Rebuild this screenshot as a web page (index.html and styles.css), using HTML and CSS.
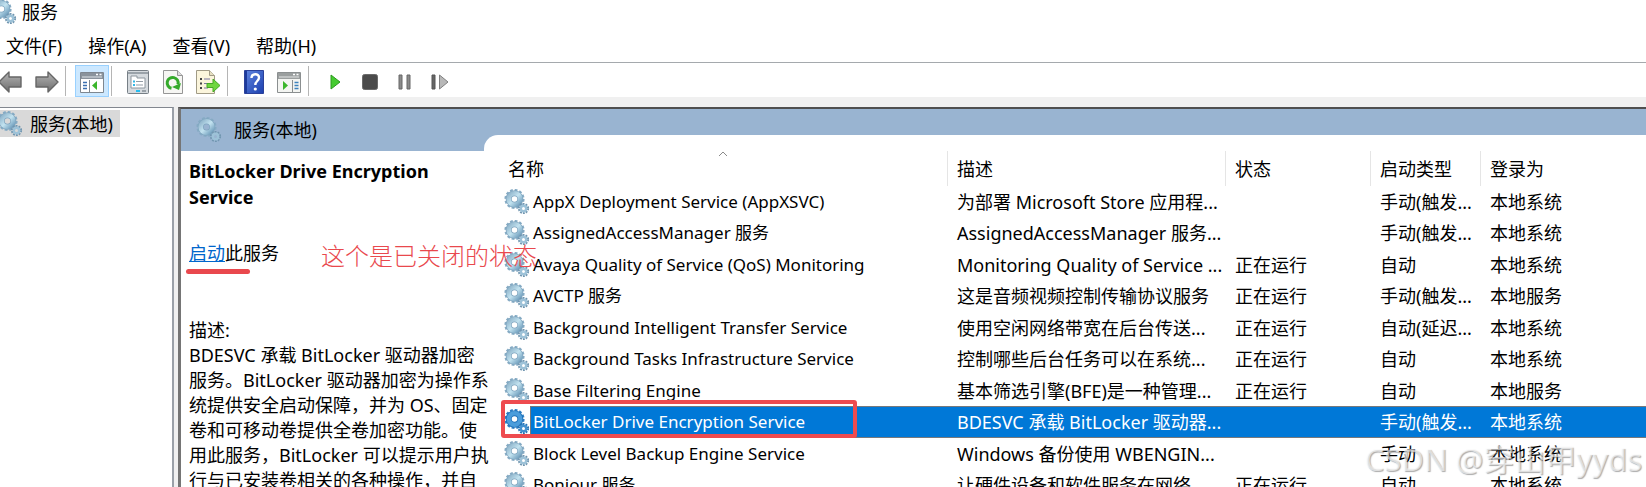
FILE: index.html
```html
<!DOCTYPE html>
<html lang="zh-CN">
<head>
    <meta charset="utf-8">
    <title>服务</title>
    <link rel="stylesheet" href="styles.css">
</head>
<body>
    <svg class="defs" aria-hidden="true">
        <defs>
            <linearGradient id="steel" x1="0" y1="0" x2="1" y2="1">
                <stop offset="0" stop-color="#8fb4cb"/>
                <stop offset=".5" stop-color="#c3e3f0"/>
                <stop offset="1" stop-color="#6f9dbc"/>
            </linearGradient>
            <linearGradient id="gray" x1="0" y1="0" x2="0" y2="1">
                <stop offset="0" stop-color="#b5b5b5"/>
                <stop offset="1" stop-color="#6c6c6c"/>
            </linearGradient>
            <linearGradient id="blue" x1="0" y1="0" x2="1" y2="1">
                <stop offset="0" stop-color="#6186e0"/>
                <stop offset="1" stop-color="#1b3fae"/>
            </linearGradient>
            <symbol id="gear" viewBox="0 0 26 26">
                <circle cx="10.500" cy="10" r="8.800" fill="none" stroke="#86abc4" stroke-width="2.600" stroke-dasharray="2.700 1.900"/>
                <circle cx="10.500" cy="10" r="5.800" fill="none" stroke="#7fa5bf" stroke-width="6"/>
                <circle cx="10.500" cy="10" r="5.800" fill="none" stroke="url(#steel)" stroke-width="4.600"/>
                <circle cx="19.500" cy="19.500" r="4.600" fill="none" stroke="#7196b0" stroke-width="2" stroke-dasharray="1.800 1.100"/>
                <circle cx="19.500" cy="19.500" r="2.700" fill="none" stroke="#9dc2d8" stroke-width="2.400"/>
            </symbol>
            <symbol id="gear-on" viewBox="0 0 26 26">
                <circle cx="10.500" cy="10" r="8.800" fill="none" stroke="#2f7fc4" stroke-width="2.600" stroke-dasharray="2.700 1.900"/>
                <circle cx="10.500" cy="10" r="5.800" fill="none" stroke="#2273ba" stroke-width="6"/>
                <circle cx="10.500" cy="10" r="5.800" fill="none" stroke="#4b9ddb" stroke-width="4.200"/>
                <circle cx="19.500" cy="19.500" r="4.600" fill="none" stroke="#2573b5" stroke-width="2" stroke-dasharray="1.800 1.100"/>
                <circle cx="19.500" cy="19.500" r="2.700" fill="none" stroke="#4391cf" stroke-width="2.400"/>
            </symbol>
            <symbol id="arrow" viewBox="0 0 26 22">
                <path d="M1 11 11 1v5h12v10H11v5z" fill="url(#gray)" stroke="#666" stroke-width="1.400" stroke-linejoin="round"/>
            </symbol>
        </defs>
    </svg>

    <header class="titlebar">
        <svg class="gear"><use href="#gear"/></svg>
        <span>服务</span>
    </header>

    <nav class="menu">
        <button>文件(F)</button>
        <button>操作(A)</button>
        <button>查看(V)</button>
        <button>帮助(H)</button>
    </nav>

    <div class="toolbar">
        <button aria-label="后退"><svg width="26" height="22"><use href="#arrow"/></svg></button>
        <button aria-label="前进"><svg class="flip" width="26" height="22"><use href="#arrow"/></svg></button>
        <span class="sep"></span>
        <button class="active" aria-label="显示/隐藏控制台树">
            <svg width="24" height="21" viewBox="0 0 24 21">
                <path d="M.5.500h23v20H.5z" fill="#fff" stroke="#7e8790"/>
                <path d="M1 1h22v6H1z" fill="#8a939c"/>
                <path d="M2 5h20" stroke="#dfe4e8"/>
                <path d="M16 2.500h2M19.500 2.500h2" stroke="#fff" stroke-width="1.500"/>
                <path d="M9.500 8v12" stroke="#7e8790"/>
                <path d="M3 10.500h4M3 13.500h4M3 16.500h4" stroke="#3b6fb0" stroke-width="1.500"/>
                <path d="m17 9-5 4.500 5 4.500z" fill="#3cb62c"/>
            </svg>
        </button>
        <span class="sep"></span>
        <button aria-label="属性">
            <svg width="22" height="24" viewBox="0 0 22 24">
                <rect x=".5" y=".5" width="21" height="23" rx="1" fill="#d5dade" stroke="#777f86"/>
                <path d="M1 3h20" stroke="#9aa2a9" stroke-width="2"/>
                <path d="M4 6h6v2h8v10H4z" fill="#fff" stroke="#8d969e"/>
                <path d="M6 11.500h2M6 15h2" stroke="#32b7e6" stroke-width="2"/>
                <path d="M9 11.500h7M9 15h7" stroke="#939ca5"/>
                <path d="M9 21h4" stroke="#27bdf0" stroke-width="2"/><path d="M15 21h4" stroke="#9aa2a9" stroke-width="2"/>
            </svg>
        </button>
        <button aria-label="刷新">
            <svg width="20" height="24" viewBox="0 0 20 24">
                <path d="M.5.500h14l5 5v18H.5z" fill="#f6f6f3" stroke="#969696"/>
                <path d="M14.500.500v5h5" fill="#ddd" stroke="#969696"/>
                <path d="M8.500 18.300a5.500 5.500 0 1 1 6.500-4" fill="none" stroke="#35aa2b" stroke-width="3"/>
                <path d="m18 13-2 7-7-3z" fill="#35aa2b"/>
            </svg>
        </button>
        <button aria-label="导出列表">
            <svg width="25" height="24" viewBox="0 0 25 24">
                <path d="M.5.500h13l5 5v18H.5z" fill="#fbf5dc" stroke="#a19b86"/>
                <path d="M13.500.500v5h5" fill="#e6dfc2" stroke="#a19b86"/>
                <path d="M4 9h2M4 13.500h2M4 18h2" stroke="#444" stroke-width="2"/>
                <path d="M8 9h6M8 13.500h4M8 18h4" stroke="#7b77a0"/>
                <path d="M11 13.500h6V9l7 6.500-7 6.500v-4.500h-6z" fill="#6fd63e" stroke="#45a926"/>
            </svg>
        </button>
        <span class="sep"></span>
        <button aria-label="帮助">
            <svg width="20" height="24" viewBox="0 0 20 24">
                <path d="M.5.500h19v23H.5z" fill="url(#blue)" stroke="#2b419a"/>
                <path d="M2 1v22" stroke="#1d3a9b" stroke-width="2"/>
                <path d="M7.500 8c0-5 7.500-5 7.500-.5 0 3.500-3.700 3.500-3.700 7.500" fill="none" stroke="#fff" stroke-width="2.400"/>
                <circle cx="11.300" cy="19" r="1.600" fill="#fff"/>
            </svg>
        </button>
        <button aria-label="显示/隐藏操作窗格">
            <svg width="24" height="21" viewBox="0 0 24 21">
                <path d="M.5.500h23v20H.5z" fill="#f4f5f2" stroke="#8b8f90"/>
                <path d="M1 1h22v6H1z" fill="#9b9f9f"/>
                <path d="M2 5h20" stroke="#e4e6e6"/>
                <path d="M16 2.500h2M19.500 2.500h2" stroke="#fff" stroke-width="1.500"/>
                <path d="M15.500 8v12" stroke="#8b8f90"/>
                <path d="M17.500 10.500h4M17.500 13.500h4M17.500 16.500h4" stroke="#3d82bd" stroke-width="1.500"/>
                <path d="m6 9 5 4.500L6 18z" fill="#3cb62c"/>
            </svg>
        </button>
        <span class="sep"></span>
        <button aria-label="启动服务">
            <svg width="11" height="16" viewBox="0 0 11 16"><path d="M1 1v14l9-7z" fill="#45cb30" stroke="#2c9a1f" stroke-linejoin="round"/></svg>
        </button>
        <button aria-label="停止服务">
            <svg width="16" height="16" viewBox="0 0 16 16"><rect x=".5" y=".5" width="15" height="15" rx="2" fill="#4b4b4b" stroke="#6b6b6b"/></svg>
        </button>
        <button aria-label="暂停服务">
            <svg width="14" height="16" viewBox="0 0 14 16"><path d="M1 1h3v14H1zM9 1h3v14H9z" fill="#8c8c8c" stroke="#666"/></svg>
        </button>
        <button aria-label="重新启动服务">
            <svg width="18" height="16" viewBox="0 0 18 16"><path d="M1 1h3v14H1z" fill="#666" stroke="#555"/><path d="M8.500 1v14l8.500-7z" fill="#b8b8b8" stroke="#808080" stroke-linejoin="round"/></svg>
        </button>
    </div>

    <main class="window">
        <aside class="tree">
            <a class="tree-item" href="#"><svg class="gear"><use href="#gear"/></svg>服务(本地)</a>
        </aside>

        <section class="panel">
            <div class="side">
                <div class="side-head"><svg class="gear"><use href="#gear"/></svg>服务(本地)</div>
                <div class="details">
                    <h2>BitLocker Drive Encryption Service</h2>
                    <p class="action"><a href="#">启动</a>此服务</p>
                    <p class="desc">描述:<br>
                        BDESVC 承载 BitLocker 驱动器加密<br>
                        服务。BitLocker 驱动器加密为操作系<br>
                        统提供安全启动保障，并为 OS、固定<br>
                        卷和可移动卷提供全卷加密功能。使<br>
                        用此服务，BitLocker 可以提示用户执<br>
                        行与已安装卷相关的各种操作，并自</p>
                    <span class="underline"></span>
                    <span class="note">这个是已关闭的状态</span>
                </div>
            </div>

            <div class="list">
                <table>
                    <colgroup>
                        <col class="col-name"><col class="col-desc"><col class="col-state"><col class="col-type"><col>
                    </colgroup>
                    <thead>
                        <tr>
                            <th>名称<svg class="sort" width="10" height="6" viewBox="0 0 10 6"><path d="m1 5 4-4 4 4" fill="none" stroke="#8a8a8a"/></svg></th>
                            <th>描述</th><th>状态</th><th>启动类型</th><th>登录为</th>
                        </tr>
                    </thead>
                    <tbody>
                        <tr>
                            <td><div class="name"><svg class="gear"><use href="#gear"/></svg><span>AppX Deployment Service (AppXSVC)</span></div></td>
                            <td>为部署 Microsoft Store 应用程...</td><td></td><td>手动(触发...</td><td>本地系统</td>
                        </tr>
                        <tr>
                            <td><div class="name"><svg class="gear"><use href="#gear"/></svg><span>AssignedAccessManager 服务</span></div></td>
                            <td>AssignedAccessManager 服务...</td><td></td><td>手动(触发...</td><td>本地系统</td>
                        </tr>
                        <tr>
                            <td><div class="name"><svg class="gear"><use href="#gear"/></svg><span>Avaya Quality of Service (QoS) Monitoring</span></div></td>
                            <td>Monitoring Quality of Service ...</td><td>正在运行</td><td>自动</td><td>本地系统</td>
                        </tr>
                        <tr>
                            <td><div class="name"><svg class="gear"><use href="#gear"/></svg><span>AVCTP 服务</span></div></td>
                            <td>这是音频视频控制传输协议服务</td><td>正在运行</td><td>手动(触发...</td><td>本地服务</td>
                        </tr>
                        <tr>
                            <td><div class="name"><svg class="gear"><use href="#gear"/></svg><span>Background Intelligent Transfer Service</span></div></td>
                            <td>使用空闲网络带宽在后台传送...</td><td>正在运行</td><td>自动(延迟...</td><td>本地系统</td>
                        </tr>
                        <tr>
                            <td><div class="name"><svg class="gear"><use href="#gear"/></svg><span>Background Tasks Infrastructure Service</span></div></td>
                            <td>控制哪些后台任务可以在系统...</td><td>正在运行</td><td>自动</td><td>本地系统</td>
                        </tr>
                        <tr>
                            <td><div class="name"><svg class="gear"><use href="#gear"/></svg><span>Base Filtering Engine</span></div></td>
                            <td>基本筛选引擎(BFE)是一种管理...</td><td>正在运行</td><td>自动</td><td>本地服务</td>
                        </tr>
                        <tr class="selected">
                            <td><div class="name"><svg class="gear"><use href="#gear-on"/></svg><span>BitLocker Drive Encryption Service</span></div><span class="box"></span></td>
                            <td>BDESVC 承载 BitLocker 驱动器...</td><td></td><td>手动(触发...</td><td>本地系统</td>
                        </tr>
                        <tr>
                            <td><div class="name"><svg class="gear"><use href="#gear"/></svg><span>Block Level Backup Engine Service</span></div></td>
                            <td>Windows 备份使用 WBENGIN...</td><td></td><td>手动</td><td>本地系统</td>
                        </tr>
                        <tr>
                            <td><div class="name"><svg class="gear"><use href="#gear"/></svg><span>Bonjour 服务</span></div></td>
                            <td>让硬件设备和软件服务在网络...</td><td>正在运行</td><td>自动</td><td>本地系统</td>
                        </tr>
                    </tbody>
                </table>
            </div>
        </section>
    </main>

    <div class="watermark">CSDN @穿山甲yyds</div>
</body>
</html>
```

FILE: styles.css
```css
* {
    box-sizing: border-box;
}
body {
    margin: 0;
    height: 100vh;
    overflow: hidden;
    display: flex;
    flex-direction: column;
    background: #fff;
    color: #000;
    font: 18px/24px "Noto Sans", "Noto Sans CJK SC", sans-serif;
}
button {
    font: inherit;
    color: inherit;
    border: 0;
    padding: 0;
    background: none;
}
svg {
    display: block;
    flex: none;
}
.defs {
    position: absolute;
    width: 0;
    height: 0;
}
.gear {
    width: 26px;
    height: 26px;
}
.flip {
    transform: scaleX(-1);
}

/* title, menu, toolbar */
.titlebar {
    display: flex;
    align-items: center;
    gap: 5px;
    height: 24px;
    margin: 0 0 6px -9px;
}
.menu {
    display: flex;
    gap: 26px;
    height: 32px;
    padding-left: 6px;
    align-items: center;
}
.toolbar {
    display: flex;
    gap: 1px;
    padding-top: 2px;
    border-top: 1px solid #a5a9ad;
}
.toolbar button {
    display: flex;
    align-items: center;
    justify-content: center;
    width: 34px;
    height: 32px;
    padding-top: 2px;
}
.toolbar button:first-child {
    margin-left: -6px;
}
.toolbar .active {
    background: #cce8ff;
    border: 1px solid #99d1ff;
}
.sep {
    width: 1px;
    margin: 1px 8px 1px 1px;
    background: #b5b5b5;
}

/* tree on the left, services panel on the right */
.window {
    flex: 1;
    min-height: 0;
    display: flex;
    gap: 4px;
    padding-top: 10px;
    background: #f0f0f0;
}
.tree {
    width: 174px;
    padding-top: 2px;
    background: #fff;
    border-top: 1px solid #82878f;
    border-right: 2px solid #9aa0a8;
}
.tree-item {
    display: flex;
    align-items: center;
    gap: 7px;
    width: 123px;
    height: 27px;
    margin-left: -3px;
    background: #d9d9d9;
    color: inherit;
    text-decoration: none;
    white-space: nowrap;
}
.panel {
    flex: 1;
    min-width: 0;
    display: flex;
    background: #99b4d1;
    border-top: 2px solid #4f4f4f;
    border-left: 3px solid #757575;
}
.side {
    width: 303px;
    display: flex;
    flex-direction: column;
}
.side-head {
    flex: none;
    display: flex;
    align-items: center;
    gap: 12px;
    height: 42px;
    padding-left: 15px;
}
.details {
    flex: 1;
    position: relative;
    z-index: 1;
    padding: 7px 0 0 8px;
    background: #fff;
}
.details h2 {
    margin: 0 0 31px;
    font-size: 18px;
    line-height: 26px;
}
.details p {
    margin: 0;
}
.action a {
    color: #0066cc;
}
.details .desc {
    margin: 53px -16px 0 0;
    line-height: 25px;
    white-space: nowrap;
}
.underline {
    position: absolute;
    left: 5px;
    top: 118px;
    width: 64px;
    height: 5px;
    border-radius: 3px;
    background: #e9484d;
}
.note {
    position: absolute;
    left: 140px;
    top: 89px;
    color: #e9484d;
    font-size: 24px;
    line-height: 30px;
    font-weight: 300;
    font-family: "Noto Sans CJK SC", sans-serif;
    white-space: nowrap;
}

.list {
    flex: 1;
    min-width: 0;
    margin-top: 26px;
    padding: 16px 0 0 15px;
    background: #fff;
    border-top-left-radius: 14px;
}
table {
    width: 100%;
    table-layout: fixed;
    border-collapse: separate;
    border-spacing: 0;
    white-space: nowrap;
}
.col-name { width: 449px; }
.col-desc { width: 278px; }
.col-state { width: 145px; }
.col-type { width: 110px; }
th {
    position: relative;
    height: 35px;
    padding: 0 0 0 9px;
    border-right: 1px solid #e5e5e5;
    font-weight: normal;
    text-align: left;
}
th:last-child {
    border-right: 0;
}
.sort {
    position: absolute;
    left: 50%;
    top: 0;
    margin-left: -5px;
}
td {
    height: 31px;
    padding: 0 0 0 9px;
}
tr:nth-child(even) td {
    height: 32px;
}
td:first-child {
    position: relative;
    padding-left: 5px;
}
.name {
    display: flex;
    align-items: center;
    height: 100%;
}
.name span {
    flex: 1;
    padding-left: 3px;
    font-size: 17px;
    line-height: 30px;
}
.selected td {
    background: #0078d7;
    color: #fff;
    border-top: 1px solid #77797c;
    border-bottom: 1px solid #77797c;
}
.selected td:first-child {
    background: none;
    border: 0;
}
.selected .name span {
    background: #0078d7;
    border: 1px solid #77797c;
    border-width: 1px 0 1px 1px;
    padding-left: 2px;
}
.box {
    position: absolute;
    left: 2px;
    top: -6px;
    width: 356px;
    height: 38px;
    border: 4px solid #ee4b4f;
    border-radius: 3px;
}

.watermark {
    position: absolute;
    right: 4px;
    bottom: 8px;
    color: rgba(255, 255, 255, 0.6);
    font-size: 31px;
    line-height: 40px;
    text-shadow: 1px 1px 1px rgba(90, 90, 90, 0.5);
}
```
